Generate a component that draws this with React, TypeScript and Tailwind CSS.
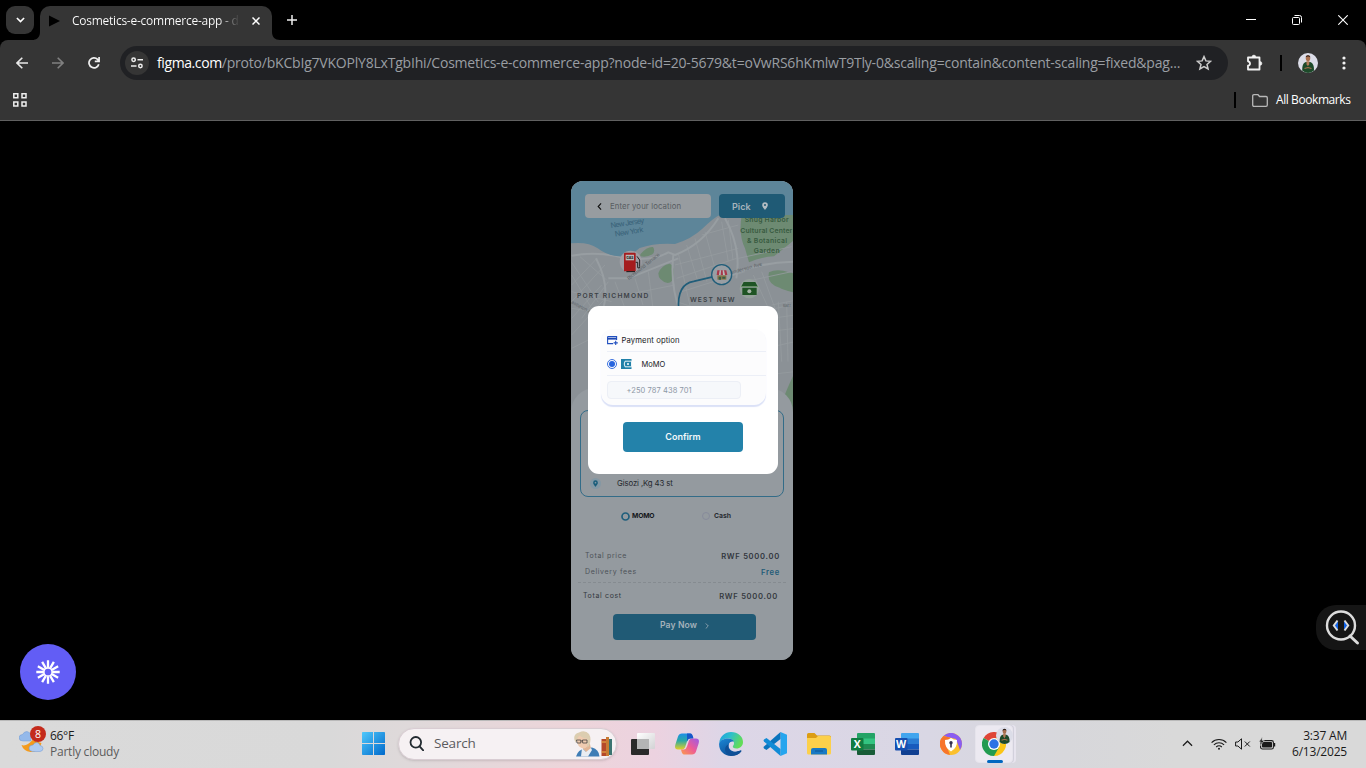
import React from "react";

type IconProps = { className?: string };

const UI = "font-['Open_Sans','Noto_Sans',sans-serif]";
const APP = "font-['Inter','Noto_Sans',sans-serif]";

function Avatar({ className }: IconProps) {
  return (
    <svg viewBox="0 0 20 20" className={className}>
      <circle cx="10" cy="10" r="10" fill="#dcdde8" />
      <path d="M4.2 17.5c0-5 1-7.5 3.6-8.4h4.4c2.7.9 3.8 3.4 3.8 8.4A10 10 0 0 1 10 20a10 10 0 0 1-5.800-2.500z" fill="#1d4a2a" />
      <path d="M8.300 8.200h3.200l-.3 3-1.300 2-1.300-2z" fill="#b27a58" />
      <ellipse cx="10" cy="5.300" rx="2.200" ry="3" fill="#a8704f" />
      <path d="M7.700 4.600C7.500 1.400 12.500 1.400 12.300 4.600 11.500 3.200 8.500 3.200 7.700 4.600z" fill="#2a1a14" />
      <path d="M6.500 15.500l3.500-1 3.500 1" stroke="#a8704f" strokeWidth="1.200" fill="none" />
    </svg>
  );
}

function TabStrip() {
  return (
    <div className="flex h-10 shrink-0 items-end bg-black">
      <div className="mb-[6px] ml-[6px] flex size-7 items-center justify-center rounded-[9px] bg-[#353535]">
        <svg viewBox="0 0 10 6" className="h-[6px] w-[9px]">
          <path d="M1 .8l4 4 4-4" stroke="#fff" strokeWidth="1.8" fill="none" />
        </svg>
      </div>
      <svg viewBox="0 0 6 8" className="h-2 w-[6px]">
        <path d="M6 0v8H-2C3 8 6 5 6 0z" fill="#353535" />
      </svg>
      <div className="flex h-[34px] w-[232px] items-center rounded-t-[10px] bg-[#353535] pl-[9px] pb-[6px] pt-[1px]">
        <svg viewBox="0 0 11 12" className="h-3 w-[11px]">
          <path d="M0 .5l11 5.500L0 11.500z" fill="#000" />
        </svg>
        <div
          className={`${UI} ml-3 mt-[1px] w-[168px] whitespace-nowrap bg-gradient-to-r from-white from-88% to-[#353535] bg-clip-text text-[12px] tracking-[-0.25px] text-transparent`}
        >
          Cosmetics-e-commerce-app - d
        </div>
        <svg viewBox="0 0 8 8" className="ml-3 size-2">
          <path d="M.5.5l7 7m0-7l-7 7" stroke="#fff" strokeWidth="1.500" />
        </svg>
      </div>
      <svg viewBox="0 0 8 8" className="size-2">
        <path d="M0 0c0 5 3 8 8 8H0z" fill="#353535" />
      </svg>
      <svg viewBox="0 0 10 10" className="mb-[15px] ml-[7px] size-[10px]">
        <path d="M5 0v10M0 5h10" stroke="#eee" strokeWidth="1.500" />
      </svg>
      <div className="mb-[15px] ml-auto mr-[18px] flex items-center gap-[36px]">
        <svg viewBox="0 0 10 10" className="size-[10px]">
          <path d="M0 4.500h10" stroke="#fff" />
        </svg>
        <svg viewBox="0 0 10 10" className="size-[10px]" fill="none" stroke="#fff">
          <rect x=".5" y="2.500" width="7" height="7" rx="1" />
          <path d="M2.500.5h5a2 2 0 0 1 2 2v5" />
        </svg>
        <svg viewBox="0 0 10 10" className="size-[10px]">
          <path d="M.3.300l9.400 9.400m0-9.400L.3 9.700" stroke="#fff" strokeWidth="1.100" />
        </svg>
      </div>
    </div>
  );
}

function Toolbar() {
  return (
    <div className="flex h-[46px] shrink-0 items-center rounded-t-[8px] bg-[#353535] pl-4">
      <svg viewBox="0 0 12 12" className="size-3" fill="none" stroke="#e8e8e8" strokeWidth="1.600">
        <path d="M12 6H1M6.300.700L1 6l5.300 5.300" />
      </svg>
      <svg viewBox="0 0 12 12" className="ml-6 size-3" fill="none" stroke="#808080" strokeWidth="1.600">
        <path d="M0 6h11M5.700.700L11 6l-5.300 5.300" />
      </svg>
      <svg viewBox="0 0 12 12" className="ml-6 size-3" fill="none" stroke="#f0f0f0" strokeWidth="1.700">
        <path d="M10.800 7.200A5 5 0 1 1 9.600 2.400L11 3.800M11.100 0v4.300H6.800" />
      </svg>
      <div className="ml-5 flex h-[34px] w-[1108px] items-center rounded-full bg-[#202124] pl-[5px]">
        <div className="flex size-6 items-center justify-center rounded-full bg-[#353535]">
          <svg viewBox="0 0 12 12" className="size-3" fill="none" stroke="#eee" strokeWidth="1.500">
            <circle cx="2.600" cy="2.700" r="1.700" />
            <path d="M6.500 2.700H12M0 9h5.500" />
            <circle cx="9.400" cy="9" r="1.700" />
          </svg>
        </div>
        <div className={`${UI} mb-[2px] ml-2 w-[1028px] whitespace-nowrap text-[14px] tracking-[-0.205px] text-[#9a9ea3]`}>
          <span className="tracking-[-0.4px] text-white">figma.com</span>
          <span>/proto/bKCbIg7VKOPlY8LxTgbIhi/Cosmetics-e-commerce-app?node-id=20-5679&amp;t=oVwRS6hKmlwT9Tly-0&amp;scaling=contain&amp;content-scaling=fixed&amp;pag...</span>
        </div>
        <svg viewBox="0 0 16 16" className="ml-[11px] size-4" fill="none" stroke="#ccc" strokeWidth="1.500">
          <path d="M8 1.600l1.900 4.300 4.700.4-3.600 3.100 1.100 4.600L8 11.600 3.900 14l1.100-4.600L1.400 6.300l4.700-.4z" />
        </svg>
      </div>
      <svg viewBox="0 0 17 17" className="mb-[2px] ml-[18px] size-[17px]" fill="none" stroke="#f2f2f2" strokeWidth="1.800">
        <path d="M2 3.500h11.500v12H2v-3.800c2.700-.4 2.700-4 0-4.400z" strokeLinejoin="round" />
        <path d="M6 3a1.900 1.900 0 0 1 3.800 0zM14 7.500a1.900 1.900 0 0 1 0 3.800z" fill="#f2f2f2" strokeWidth=".5" />
      </svg>
      <div className="ml-[17px] h-4 w-[2px] bg-black" />
      <Avatar className="ml-4 size-5" />
      <svg viewBox="0 0 4 14" className="ml-[24px] h-[14px] w-1" fill="#f2f2f2">
        <circle cx="2" cy="2" r="1.600" />
        <circle cx="2" cy="7" r="1.600" />
        <circle cx="2" cy="12" r="1.600" />
      </svg>
    </div>
  );
}

function Bookmarks() {
  return (
    <div className="flex h-[35px] shrink-0 items-center border-b border-[#606060] bg-[#353535] pb-[6px] pl-[13px]">
      <svg viewBox="0 0 14 14" className="size-[14px]" fill="none" stroke="#eee" strokeWidth="1.500">
        <path d="M.8.800h4v4h-4zM9 .8h4v4H9zM.8 9h4v4h-4zM9 9h4v4H9z" />
      </svg>
      <div className="ml-auto h-4 w-[2px] bg-black" />
      <svg viewBox="0 0 16 13" className="ml-4 h-[13px] w-4" fill="none" stroke="#b8b8b8" strokeWidth="1.300">
        <path d="M.7 2q0-1.300 1.300-1.300h4l1.600 1.800H14q1.300 0 1.300 1.300V11q0 1.300-1.300 1.300H2Q.7 12.300.7 11z" />
      </svg>
      <div className={`${UI} ml-2 w-[90px] whitespace-nowrap text-[12px] tracking-[-0.42px] text-white`}>All Bookmarks</div>
    </div>
  );
}

/** City map under the phone's content; drawn on a grid three times finer than the screen. */
function CityMap() {
  return (
    <svg viewBox="0 0 222 260" className={`${APP} absolute left-0 top-0 h-[260px] w-[222px]`}>
      <g transform="translate(-6 -6) scale(.33333)">
        <rect width="720" height="800" fill="#8b9196" />
        <path d="M530 120q-10 60 10 100l12 42q34-16 75-18l57-46V120z" fill="#6d8a72" />
        <path d="M280 295q10-26 34-29 14 4 12 34-2 24-18 24-28-6-28-29zM226 238q20-24 38-22 8 12-2 22-16 10-36 6zM612 292q24-12 60 0l20 4v58q-40-10-48-16-40-10-32-46z" fill="#6d8a72" />
        <path d="M690 590q-28 60-36 84-6 50-22 70 10 24 60 30z" fill="#6d8a72" />
        <g stroke="#959b9f" fill="none" strokeWidth="2.500">
          <path d="M20 262l80 120M20 300l60 100M45 245l80 70M20 380l100-110M20 330l76-80M20 430l90-100M50 430l80-110M20 480l110-120M20 350l120 30M20 400l130 20M20 520l80-40" />
          <path d="M340 235l40 180M365 210l34 110M390 190l36 130M420 170l30 110M470 140l20 120M490 135l14 120M330 270l190-50M335 310l180-60M350 350l190-60M410 180l110-30M520 250l160-35M565 300l50 110M590 290l40 110M540 320l140-30M540 420l140-30M150 320l30 80M210 310l24 80M250 290l14 110M180 360l150-30M335 380l60 20" />
          <path d="M620 390l70-14M620 430l70-10M610 470l80-10M600 520l90-20M640 380l10 180M665 380l4 180M600 600l90-10" />
        </g>
        <g stroke="#989ea2" fill="none" strokeWidth="6">
          <path d="M20 242q60-12 130 0 100 24 160-10l20 8q80-30 130-110" />
          <path d="M115 400q20-70-22-150M325 240q-10 90 20 170M480 130q50 90 34 180M500 300q90-40 190-40M130 310h60l150-60" />
        </g>
        <path d="M18 205q50-6 80 15 34 26 76 24 24-2 50-25 46-16 106-12 50-16 82-46 36-34 52-41H700V0H18z" fill="#5d8599" />
        <path d="M341 405q-6-78 45-86l60-14" fill="none" stroke="#205d79" strokeWidth="5" />
        <g fontSize="22" fill="#386178" transform="rotate(-9 190 155)">
          <text x="138" y="151" textLength="102">New Jersey</text>
          <text x="147" y="178" textLength="86">New York</text>
        </g>
        <g fontSize="20.500" fontWeight="600" fill="#385a40" textAnchor="middle">
          <text x="605" y="142" textLength="132">Snug Harbor</text>
          <text x="604" y="173" textLength="156">Cultural Center</text>
          <text x="606" y="204" textLength="120">&amp; Botanical</text>
          <text x="605" y="234" textLength="78">Garden</text>
        </g>
        <g fill="#5d6368" fontSize="15">
          <text transform="translate(192 316) rotate(-39)" textLength="120">Richmond Terrace</text>
          <text transform="translate(498 298) rotate(-16)" textLength="98">enderson Ave</text>
          <text x="654" y="396" fontSize="12">Barr</text>
          <text transform="translate(18 385) rotate(28)" fontSize="14">astleton Ave</text>
        </g>
        <g fill="#3c4146" fontSize="20" fontWeight="600">
          <text x="36" y="370" textLength="214">PORT RICHMOND</text>
          <text x="375" y="382" textLength="134">WEST NEW</text>
        </g>
        <circle cx="197" cy="260" r="33" fill="#a09ea5" />
        <path d="M177 236q0-3 3-3h29q3 0 3 3v53h-35z" fill="#a51c1e" />
        <path d="M182 239h25v17h-25z" fill="#b9b9b9" />
        <text x="184" y="252" fontSize="10" fontWeight="800" fill="#222">GAS</text>
        <path d="M212 262h6v16q6 4 6-3v-20l-8-11" fill="none" stroke="#222" strokeWidth="3" />
        <path d="M184 290h26" stroke="#111" strokeWidth="3" />
        <circle cx="470" cy="299" r="30" fill="#999ea3" stroke="#205d79" strokeWidth="4" />
        <path d="M457 286h27l3 14h-32z" fill="#a7384b" />
        <path d="M464 286l-2 14h5l1-14zm9 0l1 14h6l-3-14z" fill="#b8babb" />
        <path d="M457 301h27v13h-27z" fill="#8a7549" />
        <path d="M461 305h7v9h-7zm11 0h9v6h-9z" fill="#355d48" />
        <circle cx="553" cy="341" r="29" fill="#95a19b" />
        <path d="M536 321h35l8 15h-51zM532 338h43v22h-43z" fill="#1f5424" />
        <path d="M528 333h51v3h-51z" fill="#679066" />
        <circle cx="553" cy="349" r="6" fill="#a6b4a6" />
      </g>
    </svg>
  );
}

function PriceRow({ label, value, tone, className }: { label: string; value: string; tone: string; className: string }) {
  return (
    <div className={`flex h-[12px] items-center justify-between leading-none ${className}`}>
      <span className="text-[7px] tracking-[0.65px]">{label}</span>
      <span className={`mt-[3px] text-[7.600px] font-semibold tracking-[0.72px] ${tone}`}>{value}</span>
    </div>
  );
}

function PaymentDialog() {
  return (
    <div className="absolute left-[17px] top-[125px] flex h-[168px] w-[190px] flex-col items-center rounded-[11px] bg-white pt-[23px]">
      <div className="flex h-[76px] w-[165px] flex-col rounded-[12px] bg-[#fcfcfd] pl-[6px] text-[#17181c] shadow-[0_1.500px_1px_#dbe1f7]">
        <div className="flex h-[23px] items-center border-b border-[#eceff7]">
          <svg viewBox="0 0 11 9" className="h-[9px] w-[11px]">
            <path d="M.6.600h9v3.500M.6.600v7h5.500" stroke="#204fc0" strokeWidth="1.100" fill="none" />
            <path d="M.5 1.800h9.200v1.800H.5z" fill="#1c46b2" />
            <path d="M8.700 4.800V9M6.600 6.900h4.200" stroke="#204fc0" strokeWidth="1.100" />
          </svg>
          <span className="ml-[4px] mt-[1px] whitespace-nowrap text-[7.700px] tracking-[0.1px]">Payment option</span>
        </div>
        <div className="flex h-[24px] items-center border-b border-[#eceff7]">
          <div className="mt-[1px] flex size-[10px] items-center justify-center rounded-full border border-[#3a70de]">
            <div className="size-[6px] rounded-full bg-[#2865de]" />
          </div>
          <svg viewBox="0 0 11 10" className="ml-[4px] mt-[1px] h-[10px] w-[11px]">
            <path d="M0 0h10.500v10H0z" fill="#2080a8" />
            <path d="M4 2.200h6.500v5.600H4q-1.500-2.800 0-5.600z" fill="#2080a8" stroke="#fff" strokeWidth=".9" />
            <circle cx="7" cy="5" r="1" fill="#fff" />
          </svg>
          <span className="ml-[10px] mt-[2px] text-[7.500px]">MoMO</span>
        </div>
        <div className="mt-[5px] flex h-[18px] w-[134px] items-center rounded-[4px] border border-[#eceff6] bg-[#f6f8fb] pl-[19px] text-[7.500px] text-[#8d97a5]">
          <span className="mt-[2px] whitespace-nowrap tracking-[0.08px]">+250 787 438 701</span>
        </div>
      </div>
      <div className="mt-[17px] flex h-[30px] w-[120px] items-center justify-center rounded-[4px] bg-[#2382aa] text-[9px] font-semibold text-[#f2f8fa]">
        Confirm
      </div>
    </div>
  );
}

function Phone() {
  return (
    <div className={`${APP} relative ml-[571px] mt-[60px] flex h-[479px] w-[222px] flex-col overflow-hidden rounded-[12px] bg-[#959a9f]`}>
      <CityMap />
      <div className="relative flex gap-2 pl-[14px] pt-[13px]">
        <div className="flex h-6 w-[126px] items-center rounded-[4px] bg-[#979ca0] pl-[12px]">
          <svg viewBox="0 0 5 8" className="h-[7px] w-[5px]">
            <path d="M4.300.500L1 4l3.300 3.500" stroke="#111" strokeWidth="1.300" fill="none" />
          </svg>
          <span className="ml-[8px] mt-[2px] whitespace-nowrap text-[7.800px] tracking-[0.1px] text-[#585d62]">Enter your location</span>
        </div>
        <div className="flex h-6 w-[66px] items-center rounded-[4px] bg-[#1f5a75] pl-[13px]">
          <span className="mt-px text-[9px] font-semibold text-[#a6b4bd]">Pick</span>
          <svg viewBox="0 0 7 9" className="ml-auto mr-[17px] h-[8px] w-[6px]">
            <path d="M3.500 0A3.300 3.300 0 0 1 6.800 3.300C6.800 5.500 3.500 9 3.500 9S.2 5.500.2 3.300A3.300 3.300 0 0 1 3.500 0zm0 2.100a1.200 1.200 0 1 0 0 2.400 1.200 1.200 0 0 0 0-2.400z" fill="#b3bdc3" />
          </svg>
        </div>
      </div>
      <div className="relative mt-[170px] flex flex-1 flex-col rounded-t-[24px] bg-[#949a9f] pt-[22px]">
        <div className="mx-[9px] flex h-[87px] w-[204px] items-end rounded-[8px] border border-[#336c88] pb-[7px] pl-[9px]">
          <div className="flex size-[11px] items-center justify-center rounded-full bg-[#8398a5]">
            <svg viewBox="0 0 7 9" className="h-[7px] w-[5px]">
              <path d="M3.500 0A3.300 3.300 0 0 1 6.800 3.300C6.800 5.500 3.500 9 3.500 9S.2 5.500.2 3.300A3.300 3.300 0 0 1 3.500 0zm0 2.100a1.200 1.200 0 1 0 0 2.400 1.200 1.200 0 0 0 0-2.400z" fill="#175c7a" />
            </svg>
          </div>
          <span className="ml-[16px] whitespace-nowrap text-[7.800px] leading-[12px] tracking-[-0.12px] text-[#24282e]">Gisozi ,Kg 43 st</span>
        </div>
        <div className="mt-[14px] flex h-[10px] items-center pl-[50px] text-[6.800px] font-bold leading-none text-[#15181c]">
          <svg viewBox="0 0 9 9" className="size-[9px]">
            <circle cx="4.500" cy="4.500" r="3.500" fill="none" stroke="#205f7c" strokeWidth="1.700" />
          </svg>
          <span className="ml-[2px] w-[24px] tracking-[-0.2px]">MOMO</span>
          <div className="ml-[46px] size-[8px] rounded-full border border-[#878b9b]" />
          <span className="ml-[4px] text-[#292d33]">Cash</span>
        </div>
        <PriceRow label="Total price" value="RWF 5000.00" tone="text-[#31363d]" className="mt-[28px] pl-[14px] pr-[13px] text-[#4d5258]" />
        <PriceRow label="Delivery fees" value="Free" tone="text-[#225b78]" className="mt-[4px] pl-[14px] pr-[13px] text-[#4d5258]" />
        <div className="ml-[7px] mt-[5px] w-[208px] border-t border-dashed border-[#858b90]" />
        <PriceRow label="Total cost" value="RWF 5000.00" tone="text-[#363b41]" className="mt-[6px] pl-[12px] pr-[15px] text-[#33383e]" />
        <div className="ml-[42px] mt-[13px] flex h-[26px] w-[143px] items-center rounded-[4px] bg-[#205a75] pb-[3px] pl-[47px] text-[#a5b2bb]">
          <span className="whitespace-nowrap text-[8.600px] font-semibold tracking-[0.1px]">Pay Now</span>
          <svg viewBox="0 0 4 7" className="ml-[8px] h-[6px] w-1">
            <path d="M.5.500l3 3-3 3" stroke="#a5b2bb" strokeWidth=".9" fill="none" />
          </svg>
        </div>
      </div>
      <PaymentDialog />
    </div>
  );
}

function Stage() {
  return (
    <div className="relative h-[599px] shrink-0 overflow-hidden bg-black">
      <Phone />
      <div className="absolute left-5 top-[523px] flex size-14 items-center justify-center rounded-full bg-[#625df5]">
        <svg viewBox="0 0 24 24" className="size-6" fill="none" stroke="#fff">
          <circle cx="12" cy="12" r="4.200" strokeWidth="1.700" />
          <path
            d="M12 .3v7M12 16.700v7M.3 12h7M16.700 12h7M6.150 1.870l3.500 6.060M14.350 16.070l3.500 6.060M1.870 6.150l6.060 3.500M16.070 14.350l6.060 3.500M17.850 1.870l-3.500 6.060M9.650 16.070l-3.500 6.060M22.130 6.150l-6.060 3.500M7.930 14.350l-6.060 3.500"
            strokeWidth="2.300"
          />
        </svg>
      </div>
      <div className="absolute right-0 top-[484px] h-[45px] w-[50px] rounded-l-[20px] bg-[#151515] pl-[9px] pt-[5px]">
        <svg viewBox="0 0 35 36" className="h-9 w-[35px]" fill="none">
          <circle cx="16" cy="15.500" r="14" stroke="#dcdcdc" strokeWidth="2.400" />
          <path d="M25 26l7.500 7" stroke="#dcdcdc" strokeWidth="3" strokeLinecap="round" />
          <path d="M13 11v9l-3.500-4.500zM19 11v9l3.500-4.500z" fill="#0f62e8" />
          <path d="M12.500 10.500l-3.700 5 3.700 5M19.500 10.500l3.700 5-3.700 5" stroke="#dcdcdc" strokeWidth="2" />
        </svg>
      </div>
    </div>
  );
}

function WindowsLogo() {
  return (
    <svg viewBox="0 0 23 23" className="size-[23px]">
      <defs>
        <linearGradient id="win" x1="0" y1="0" x2="1" y2="1" gradientUnits="objectBoundingBox">
          <stop offset="0" stopColor="#4fc8fb" />
          <stop offset="1" stopColor="#0069cb" />
        </linearGradient>
      </defs>
      <path d="M0 .8Q0 0 .8 0H11v11H0zM12 0h10.200q.8 0 .8.800V11H12zM0 12h11v11H.8q-.8 0-.8-.8zM12 12h11v10.200q0 .8-.8.800H12z" fill="url(#win)" />
    </svg>
  );
}

function SearchBox() {
  return (
    <div className="ml-[3px] mr-1 flex h-8 w-[219px] items-center rounded-full border border-[#d9cdd3] bg-[#f6f1f3] pl-[10px] pr-[3px] shadow-sm">
      <svg viewBox="0 0 15 15" className="size-[15px]" fill="none" stroke="#222a30" strokeWidth="1.800">
        <circle cx="6.800" cy="6.300" r="5.300" />
        <path d="M10.600 10.300l3.600 4" strokeLinecap="round" />
      </svg>
      <span className={`${UI} ml-[10px] text-[13.500px] tracking-[-0.2px] text-[#5b5b5e]`}>Search</span>
      <svg viewBox="0 0 40 26" className="ml-auto h-[26px] w-10">
        <path d="M3 25.500q2-7 9-8l7-1q7 2 7.500 9z" fill="#3f7db5" />
        <path d="M9 13h8l1 5-4 4-4-4z" fill="#e0b595" />
        <path d="M9 17l4 4 5-4 1 2-4 6.500H8z" fill="#e9edf2" />
        <path d="M3.500 8q0-6 5-6.500h5q3 2 2.500 8-.5 7-5 8-5-.5-6.500-5z" fill="#efcbb0" />
        <path d="M1.500 9Q0 3 6 1.500 12-1.500 16 3q3 5 0 12l-1.500 1.500q-.5-6-.5-9Q9 7 7 4.500 4.500 5 3 12z" fill="#dccdb0" />
        <path d="M3.500 9h4.300v3H4zM9.500 9h4.500v3H9.700zM7.800 10h1.700" fill="none" stroke="#333" strokeWidth=".7" />
        <path d="M28.500 8h4.500v17h-4.500z" fill="#b5492a" />
        <path d="M33 6h3v19h-3z" fill="#c87b33" />
        <path d="M36 8h3v16h-3z" fill="#3b7471" />
        <path d="M28.500 11h4.500M28.500 21h4.500" stroke="#edbb4c" />
      </svg>
    </div>
  );
}

function TaskViewIcon() {
  return (
    <svg viewBox="0 0 24 24" className="size-6">
      <defs>
        <linearGradient id="tv" x1="0" y1="0" x2="1" y2="1">
          <stop offset="0" stopColor="#fff" />
          <stop offset="1" stopColor="#d2d2d4" />
        </linearGradient>
      </defs>
      <rect x="0" y="7" width="18" height="16" rx="1" fill="#2a2a2a" />
      <rect x="6" y="1" width="18" height="16" rx="1" fill="url(#tv)" />
      <path d="M6 7h12v10H6z" fill="#b4b4b5" />
    </svg>
  );
}

function CopilotIcon() {
  return (
    <svg viewBox="0 0 24 22" className="h-[22px] w-6">
      <defs>
        <linearGradient id="cp1" x1="0" y1="0" x2="0" y2="1">
          <stop offset="0" stopColor="#1c8fe8" />
          <stop offset=".45" stopColor="#2aa9a4" />
          <stop offset="1" stopColor="#e4cf27" />
        </linearGradient>
        <linearGradient id="cp2" x1="1" y1="0" x2="0" y2="1">
          <stop offset="0" stopColor="#9b5be8" />
          <stop offset=".5" stopColor="#ee5b96" />
          <stop offset="1" stopColor="#fb9c4a" />
        </linearGradient>
      </defs>
      <path d="M7 .5h8q2 0 3 5h-3q-2 0-3 3l-2 6q-1 2-3 2H3q-4 0-2.600-5L3 3.500Q4 .5 7 .5z" fill="url(#cp1)" />
      <path d="M12 .5h3.500q2 0 3 5H15q-2 0-3 3z" fill="#1658c9" />
      <path d="M17 21.500H9q-2 0-3-5h3q2 0 3-3l2-6q1-2 3-2h4q4 0 2.600 5L21 18.500q-1 3-4 3z" fill="url(#cp2)" />
    </svg>
  );
}

function EdgeIcon() {
  return (
    <svg viewBox="0 0 24 24" className="size-6">
      <defs>
        <linearGradient id="ed1" x1="0" y1="0" x2="1" y2=".4">
          <stop offset="0" stopColor="#1b9de3" />
          <stop offset=".5" stopColor="#2ec0c9" />
          <stop offset="1" stopColor="#62dc58" />
        </linearGradient>
        <linearGradient id="ed2" x1="0" y1="0" x2=".6" y2="1">
          <stop offset="0" stopColor="#1c88d6" />
          <stop offset="1" stopColor="#0c4a92" />
        </linearGradient>
      </defs>
      <path d="M.2 11C1 4 6 0 12 0c7 0 12 4.500 12 10 0 4-3 6.500-6.500 6.500-3 0-4-1.200-3.600-2.300.5-1 1.100-1.500 1.100-3C15 8.500 12.500 6.500 9 6.500 5 6.500 1.500 8.500.2 11z" fill="url(#ed1)" />
      <path d="M.1 12C.5 8.800 4 6.500 9 6.500c3.500 0 5.500 1.500 5.900 3.500-1.300-.9-4.900-.5-5.300 3.500-.3 4 4.500 8.500 11.500 4.900 1-.5 1.800.1 1.200 1C20 22.500 16 24 12 24 5 24-.2 18.500.1 12z" fill="url(#ed2)" />
      <path d="M9.700 12.300c-1.700 5.700 3.300 9.700 9.600 6.800l2.900.1C18 25 9 25 6.500 19.500c-1.300-3.200.5-6 3.200-7.200z" fill="#0e4f97" />
    </svg>
  );
}

function CodeIcon() {
  return (
    <svg viewBox="0 0 24 24" className="size-6">
      <path d="M17.500 0L24 2.700v18.600L17.500 24z" fill="#26a5ee" />
      <path d="M17.500 0v7L3.500 18 1 16.500q-1-1 0-2z" fill="#0a74bd" />
      <path d="M17.500 24v-7L3.500 6 1 7.500q-1 1 0 2z" fill="#118bd6" />
    </svg>
  );
}

function ExplorerIcon() {
  return (
    <svg viewBox="0 0 24 22" className="h-[22px] w-6">
      <path d="M0 1.500Q0 0 1.500 0h6L10 2.500h12.500Q24 2.500 24 4v16H0z" fill="#dc9d14" />
      <path d="M0 5h9l2-2h11.500Q24 3 24 4.500V20q0 1.500-1.500 1.500h-21Q0 21.500 0 20z" fill="#fcd04b" />
      <path d="M4 21.500V17q0-2 2-2h12q2 0 2 2v4.500z" fill="#1879c4" />
      <path d="M8 18h8" stroke="#0d5592" />
    </svg>
  );
}

function OfficeIcon({ letter, shades, badge }: { letter: string; shades: string[]; badge: string }) {
  return (
    <svg viewBox="0 0 24 22" className="h-[22px] w-6 font-['Open_Sans',sans-serif]">
      <path d="M6 1q0-1 1-1h16q1 0 1 1v5H6z" fill={shades[0]} />
      <path d="M6 5.500h18V11H6z" fill={shades[1]} />
      <path d="M6 11h18v5.500H6z" fill={shades[2]} />
      <path d="M6 16.500h18V21q0 1-1 1H7q-1 0-1-1z" fill={shades[3]} />
      <rect y="5" width="12.500" height="12.500" rx="1" fill={badge} />
      <text x="6.200" y="15" fontSize="10.500" fontWeight="700" fill="#fff" textAnchor="middle">{letter}</text>
    </svg>
  );
}

function VpnBrowserIcon() {
  return (
    <svg viewBox="0 0 22 22" className="size-[22px]">
      <circle cx="11" cy="11" r="11" fill="#fbc02c" />
      <path d="M3.500 3A11 11 0 0 1 22 11q0 3-2 6L16 6z" fill="#8a5cf2" />
      <path d="M3.500 3Q-3 9 1.500 16.500 4 21 10 22L5 9l6-4z" fill="#f7742b" />
      <path d="M5 7q3.500 0 6-2 2.500 2 6 2 .5 8-6 11.500Q4.500 15 5 7z" fill="#fff" />
      <circle cx="11" cy="9.800" r="1.700" fill="#343052" />
      <path d="M10.200 10h1.600v4.500h-1.600z" fill="#343052" />
    </svg>
  );
}

function ChromeIcon() {
  return (
    <svg viewBox="0 0 24 24" className="size-6">
      <path d="M12 12L1.600 6A12 12 0 0 1 22.400 6z" fill="#df4637" />
      <path d="M12 12L22.400 6A12 12 0 0 1 12 24z" fill="#fbc516" />
      <path d="M1.600 6L12 12l5.200 3L12 24A12 12 0 0 1 1.600 6z" fill="#239b50" />
      <path d="M12 6h10.400a12 12 0 0 1 .6 9h-6z" fill="#fbc516" />
      <circle cx="12" cy="12" r="6" fill="#fff" />
      <circle cx="12" cy="12" r="4.700" fill="#2b73e5" />
    </svg>
  );
}

function Cell({ children }: { children: React.ReactNode }) {
  return <div className="flex w-11 items-center justify-center">{children}</div>;
}

function WeatherIcon() {
  return (
    <svg viewBox="0 0 25 24" className="h-6 w-[25px]">
      <path d="M2.500 16q5 2 11-5l9 3q-2 9-11 9-7-1-9-7z" fill="#f49b1d" />
      <path d="M4 12q-4 0-4-3.500Q.5 5.500 3.500 5.500 5 2.500 8 2.500q3 .5 4 3.500v6z" fill="#94b9ea" stroke="#6f98d4" strokeWidth=".5" />
      <path d="M13.500 22.500q-3.500-.5-3.500-3.500.5-3 4-3 1-2.500 4-2.500 2.500.5 3 3 3 .5 3 3t-3 3z" fill="#afcbf1" stroke="#6f98d4" strokeWidth=".5" />
    </svg>
  );
}

function Taskbar() {
  return (
    <div className={`${UI} flex h-12 shrink-0 items-stretch border-t border-[#b9b9b9] bg-[linear-gradient(90deg,#dadada_0%,#d9d9d9_24%,#dfd9da_30%,#edd5da_42%,#ecd2e0_48%,#ddd6e7_53%,#d9d7e4_68%,#d7d7db_78%,#d9d9d9_86%)]`}>
      <div className="flex w-[351px] items-start pl-[19px] pt-[8px]">
        <div className="relative">
          <WeatherIcon />
          <div className="absolute -top-[3px] left-[11px] flex size-4 items-center justify-center rounded-full bg-[#c42b1c] text-[10.500px] leading-none text-white">8</div>
        </div>
        <div className="ml-[6px] whitespace-nowrap text-[12px] leading-4 tracking-[-0.3px]">
          <div className="-mt-px text-[#1a1a1a]">66°F</div>
          <div className="tracking-[-0.23px] text-[#5c5c5c]">Partly cloudy</div>
        </div>
      </div>
      <div className="flex items-center pb-[2px]">
        <Cell><WindowsLogo /></Cell>
        <SearchBox />
        <Cell><TaskViewIcon /></Cell>
        <Cell><CopilotIcon /></Cell>
        <Cell><EdgeIcon /></Cell>
        <Cell><CodeIcon /></Cell>
        <Cell><ExplorerIcon /></Cell>
        <Cell><OfficeIcon letter="X" shades={["#23a366", "#33c481", "#1f8a52", "#185c37"]} badge="#107c41" /></Cell>
        <Cell><OfficeIcon letter="W" shades={["#41a5ee", "#2b7cd3", "#185abd", "#103f91"]} badge="#164fb0" /></Cell>
        <Cell><VpnBrowserIcon /></Cell>
        <div className="relative ml-[2px] flex h-[38px] w-[38px] items-center justify-center rounded-[4px] border border-[#e6e4ec] bg-[#ece9f1] shadow-[1px_0_0_#d2d0dc,3px_0_0_#e7e4ee]">
          <ChromeIcon />
          <Avatar className="absolute right-[-1px] top-[1px] size-[17px]" />
          <div className="absolute -bottom-px left-[11px] h-[3px] w-4 rounded-full bg-[#0067c0]" />
        </div>
      </div>
      <div className="ml-auto flex items-center pb-[2px] pr-[19px]">
        <svg viewBox="0 0 12 7" className="h-[7px] w-[11px]">
          <path d="M1 6l5-5 5 5" stroke="#1a1a1a" strokeWidth="1.300" fill="none" />
        </svg>
        <svg viewBox="0 0 16 12" className="ml-[18px] h-3 w-4" fill="none" stroke="#1a1a1a" strokeWidth="1.100">
          <path d="M.6 4.600a10.400 10.400 0 0 1 14.800 0M2.900 6.900a7.200 7.200 0 0 1 10.200 0M5.200 9a4 4 0 0 1 5.600 0" />
          <circle cx="8" cy="10.700" r="1" fill="#1a1a1a" stroke="none" />
        </svg>
        <svg viewBox="0 0 16 12" className="ml-[8px] h-3 w-4" fill="none" stroke="#1a1a1a">
          <path d="M.6 4h2.300L6.500.8v10.400L2.900 8H.6zM9.800 3.500l5 5m0-5l-5 5" />
        </svg>
        <svg viewBox="0 0 17 14" className="ml-[8px] h-[14px] w-[17px]">
          <rect x="1.600" y="3.600" width="12.800" height="8.400" rx="1.800" fill="none" stroke="#1a1a1a" strokeWidth="1.100" />
          <rect x="3" y="5" width="10" height="5.600" rx=".8" fill="#1a1a1a" />
          <path d="M15 6h1.200v3.600H15z" fill="#1a1a1a" />
          <path d="M3.200 0L0 5h2.200L1.500 8.500 5.200 3.500H3z" fill="#1a1a1a" stroke="#dadada" strokeWidth=".6" />
        </svg>
        <div className="ml-[14px] w-[57px] whitespace-nowrap text-[12px] leading-4 tracking-[-0.2px] text-[#1a1a1a]">
          <div className="text-right">3:37 AM</div>
          <div className="text-right">6/13/2025</div>
        </div>
      </div>
    </div>
  );
}

export default function App() {
  return (
    <div className="flex h-[768px] w-[1366px] flex-col overflow-hidden bg-black">
      <TabStrip />
      <Toolbar />
      <Bookmarks />
      <Stage />
      <Taskbar />
    </div>
  );
}
